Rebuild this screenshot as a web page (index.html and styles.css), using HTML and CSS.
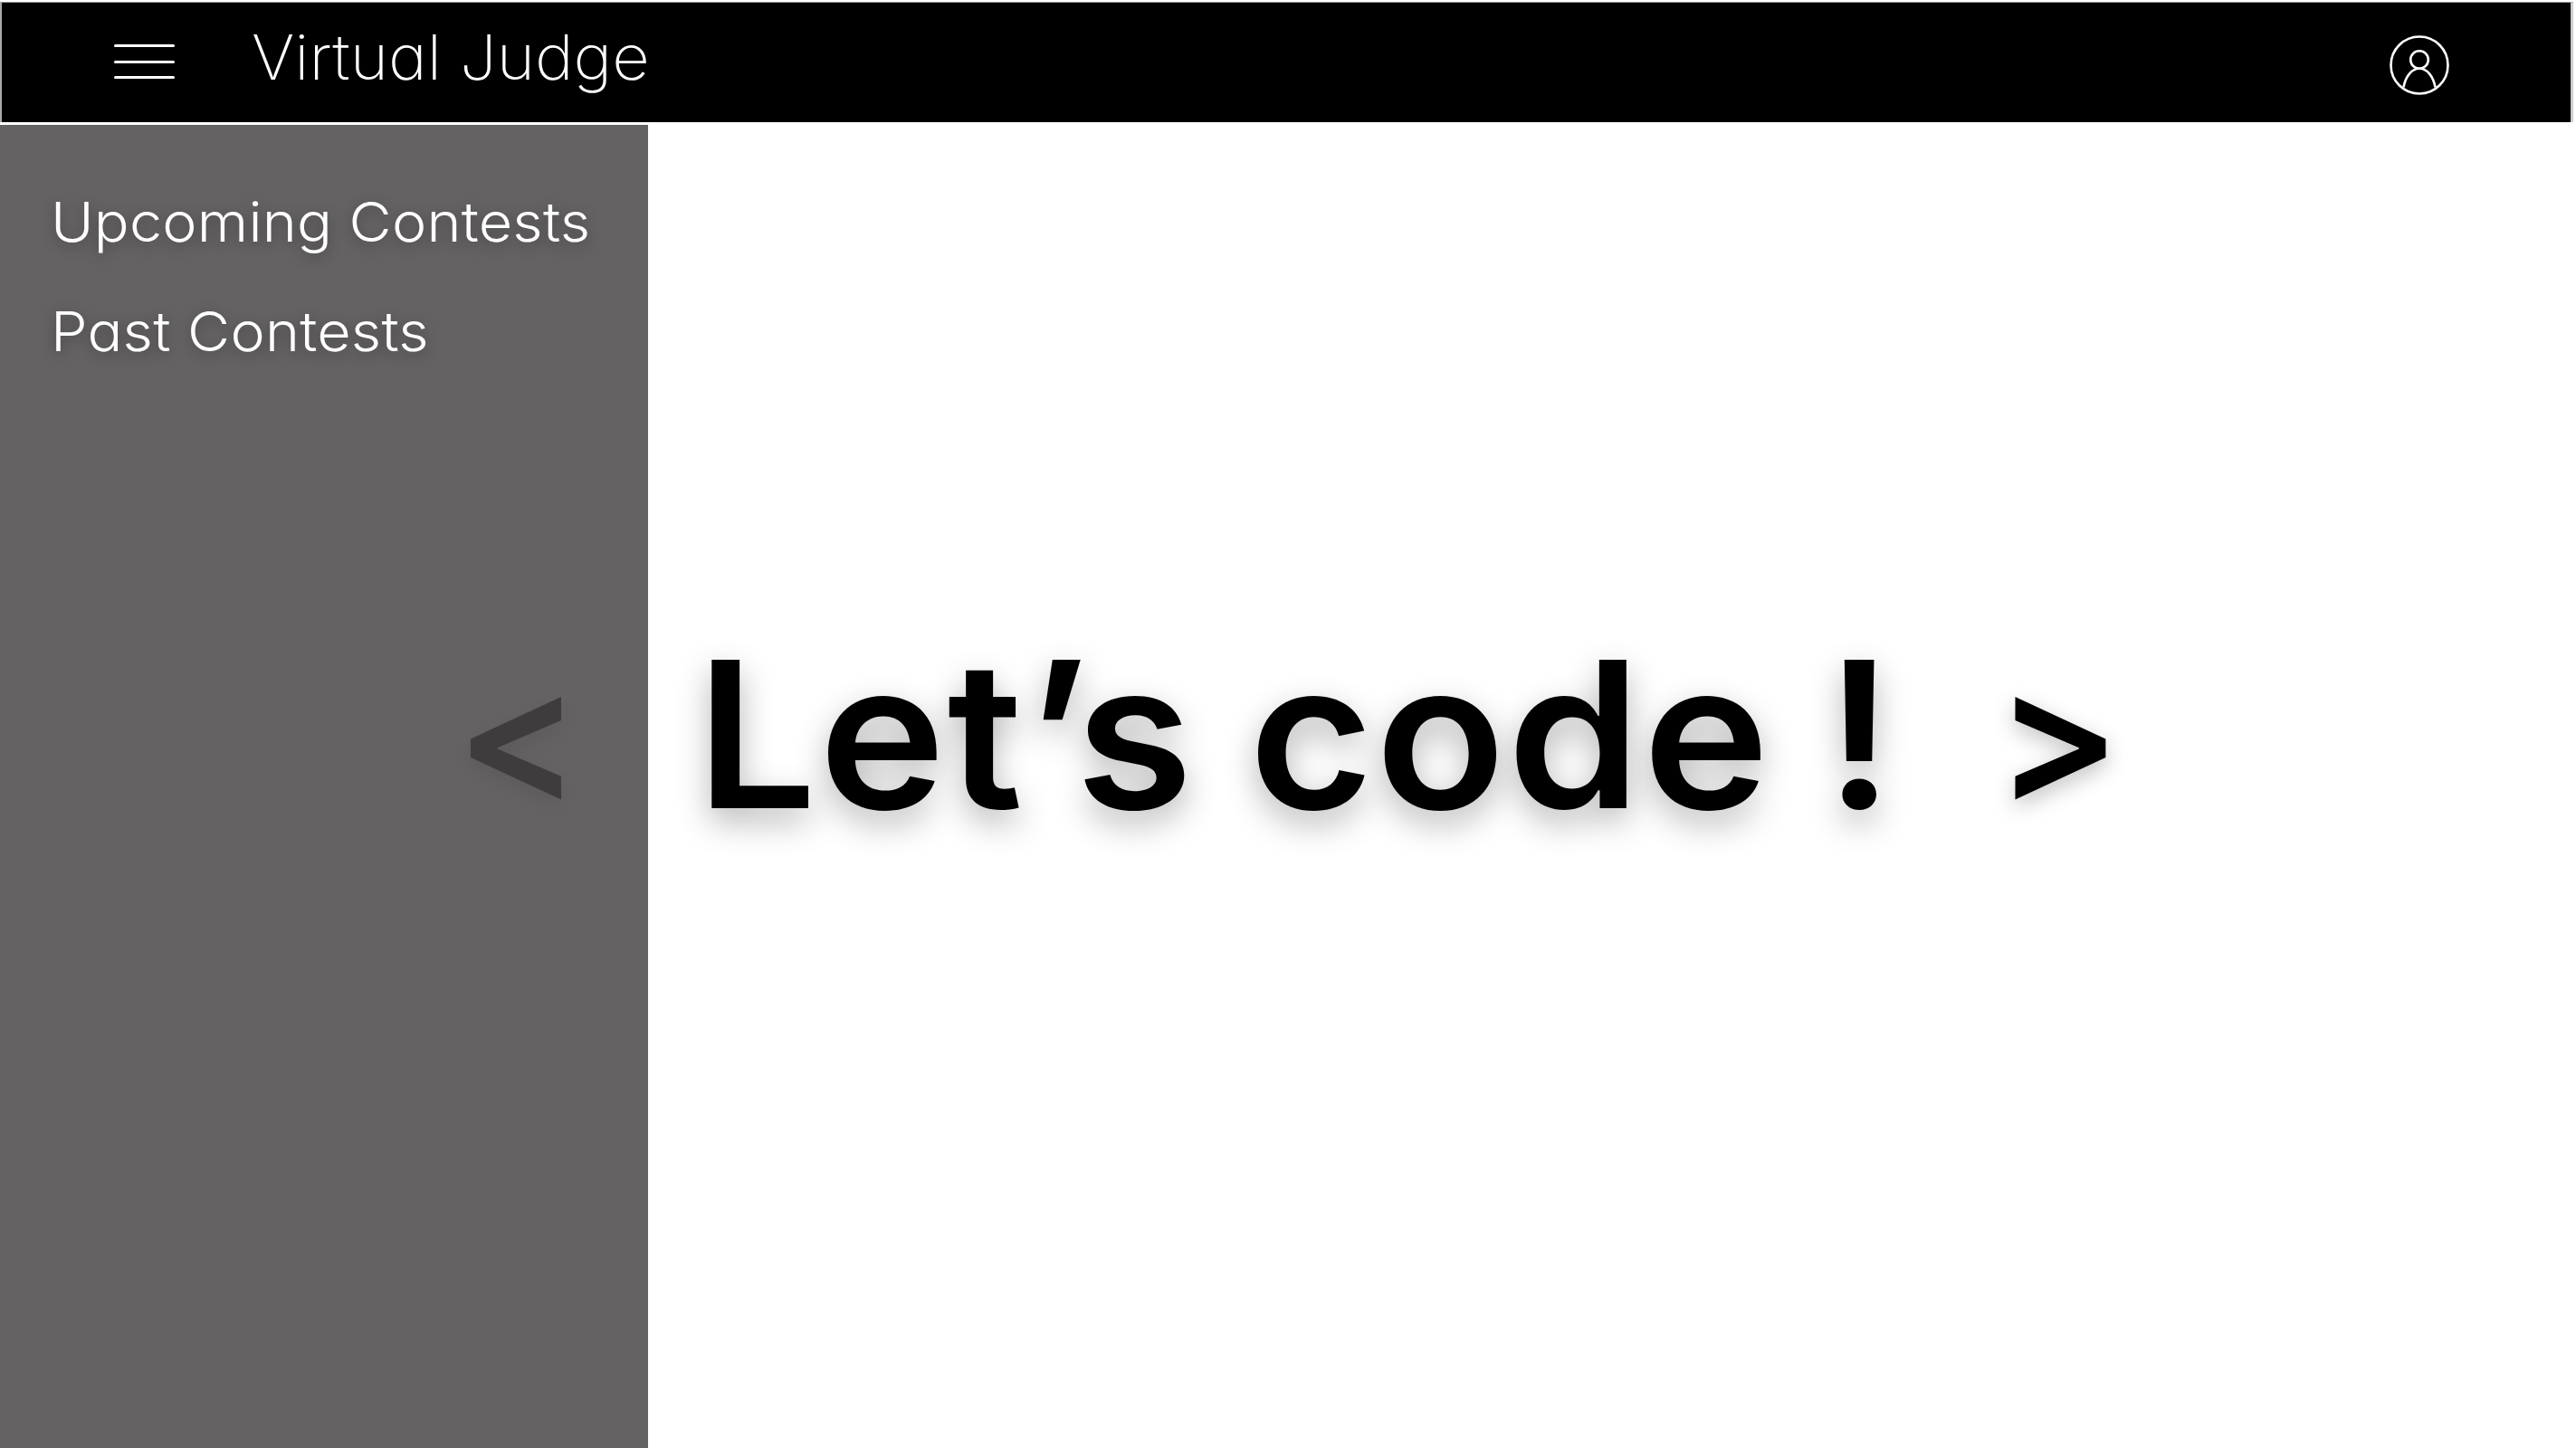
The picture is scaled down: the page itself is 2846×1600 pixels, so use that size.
FILE: index.html
```html
<!DOCTYPE html>
<html lang="en">
<head>
    <meta charset="UTF-8">
    <meta name="viewport" content="width=device-width, initial-scale=1.0">
    <title>Virtual Judge</title>
    <link rel="stylesheet" href="styles.css">
</head>
<body>
    <!-- top bar -->
    <header class="topbar">
        <div class="hamburger">
            <span></span>
            <span></span>
            <span></span>
        </div>
        <div class="brand">Virtual Judge</div>
        <svg class="profile" viewBox="0 0 66 66" fill="none" stroke="#fff" stroke-width="2.6">
            <circle cx="33" cy="33" r="31.5"/>
            <circle cx="33" cy="27" r="9.8"/>
            <path d="M15.5 57.5C17.5 46 24 36.8 33 36.8S48.5 46 50.5 57.5"/>
        </svg>
    </header>

    <div class="content">
        <!-- slider -->
        <main class="slider">
            <div class="arrow">&lt;</div>
            <h1 class="headline">Let’s code !</h1>
            <div class="arrow">&gt;</div>
        </main>

        <!-- side menu, lies over the slider -->
        <nav class="sidemenu">
            <a href="#">Upcoming Contests</a>
            <a href="#">Past Contests</a>
        </nav>
    </div>
</body>
</html>
```

FILE: styles.css
```css
/* page */
body, html {
    margin: 0;
    padding: 0;
    width: 100%;
    height: 100%;
    overflow: hidden;
    background: #fff;
    font-family: Inter, "Noto Sans", sans-serif;
    font-feature-settings: "cv11" 1;
}

body {
    display: flex;
    flex-direction: column;
}

/* top bar */
.topbar {
    display: flex;
    align-items: center;
    box-sizing: border-box;
    height: 133px;
    margin: 2px 3px 0 0;
    padding-left: 126px;
    padding-right: 134px;
    background: #000;
    border-top: 1px solid #999;
    border-left: 2px solid #aaa;
    border-right: 3px solid #ccc;
    color: #fff;
}

.hamburger {
    display: flex;
    flex-direction: column;
    justify-content: space-between;
    width: 67px;
    height: 38px;
    margin-left: -2px;
    margin-top: -2px;
}

.hamburger span {
    display: block;
    height: 3px;
    border-radius: 2px;
    background: #fff;
}

.brand {
    margin-left: 85px;
    margin-top: -12px;
    font-size: 69px;
    font-weight: 200;
    transform: scaleX(1.045);
    transform-origin: left;
}

.profile {
    width: 66px;
    height: 66px;
    margin-left: auto;
    margin-top: 5px;
}

/* content below the bar */
.content {
    position: relative;
    flex: 1;
    margin-top: 3px;
}

.slider {
    display: flex;
    align-items: center;
    height: 100%;
    padding-bottom: 116px;
    box-sizing: border-box;
    padding-left: 503px;
}

.headline {
    margin: 0 0 0 127px;
    font-size: 225px;
    font-weight: 600;
    line-height: 1;
    letter-spacing: 2px;
    word-spacing: -2px;
    color: #000;
    text-shadow: 0 14px 36px rgba(0, 0, 0, 0.3);
    transform: scaleX(1.05);
    transform-origin: left;
}

.arrow {
    font-size: 206px;
    font-weight: 600;
    line-height: 1;
    color: #000;
    text-shadow: 0 8px 24px rgba(0, 0, 0, 0.25);
}

.arrow:last-child {
    margin-left: 174px;
}

/* side menu */
.sidemenu {
    position: absolute;
    top: 0;
    left: 0;
    bottom: 0;
    width: 716px;
    box-sizing: border-box;
    padding: 72px 0 0 56px;
    display: flex;
    flex-direction: column;
    gap: 50px;
    background: rgba(74, 71, 72, 0.85);
}

.sidemenu a {
    color: #fff;
    font-size: 61px;
    font-weight: 350;
    line-height: 71px;
    letter-spacing: 0.2px;
    text-decoration: none;
    text-shadow: 0 4px 14px rgba(0, 0, 0, 0.35);
    transform: scaleX(1.06);
    transform-origin: left;
}
```
